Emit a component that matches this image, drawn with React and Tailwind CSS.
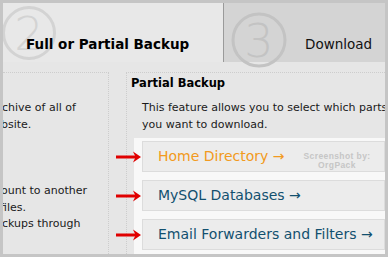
import React from "react";

function RedArrow() {
  return (
    <svg width="26" height="12" viewBox="0 0 26 12" className="absolute left-[-27px] top-1/2 -translate-y-1/2">
      <rect x="0" y="4.5" width="20" height="3" fill="#e00000" />
      <path d="M17 0.5 L25 6 L17 11.5 L19.5 6 Z" fill="#e00000" />
    </svg>
  );
}

function Item({ label, orange, children }) {
  return (
    <div className="relative h-[31px] shrink-0 border border-[#dcdcdc] bg-[#ececec] flex items-center pl-[15px]">
      <RedArrow />
      <span className={orange ? "text-[#f29a20] text-[14px]" : "text-[#12506f] text-[14px]"}>
        {label} →
      </span>
      {children}
    </div>
  );
}

export default function App() {
  return (
    <div
      className="w-[388px] h-[257px] overflow-hidden border-[3px] border-[#c5c5c5] bg-[#e6e6e6] flex flex-col"
      style={{ fontFamily: '"DejaVu Sans", Verdana, sans-serif' }}
    >
      {/* Tabs */}
      <div className="h-[59px] flex shrink-0">
        <div className="relative w-[220px] bg-[#e8e8e8] flex items-end pb-[10px] pl-[23px]">
          <svg width="60" height="60" viewBox="0 0 60 60" className="absolute left-[-1px] top-[1px]">
            <circle cx="27" cy="29" r="25.5" fill="none" stroke="#d3d3d3" strokeWidth="3" />
            <text x="27" y="46" textAnchor="middle" fontSize="46" fontWeight="200" fill="#d3d3d3" fontFamily="DejaVu Sans, sans-serif">2</text>
          </svg>
          <span className="relative text-[13.5px] font-bold text-black leading-[16px]">Full or Partial Backup</span>
        </div>
        <div className="relative flex-1 bg-[#d4d4d4] border-l border-[#9a9a9a] flex items-end pb-[10px] pl-[81px]">
          <svg width="64" height="58" viewBox="0 0 64 58" className="absolute left-[5px] top-[8px]">
            <circle cx="30" cy="29" r="26" fill="none" stroke="#c3c3c3" strokeWidth="3" />
            <text x="30" y="46" textAnchor="middle" fontSize="46" fontWeight="200" fill="#c3c3c3" fontFamily="DejaVu Sans, sans-serif">3</text>
          </svg>
          <span className="relative text-[13.5px] text-[#111] leading-[16px]">Download</span>
        </div>
      </div>

      {/* Content */}
      <div className="flex-1 flex pt-[10px] min-h-0">
        <div className="w-[106px] shrink-0 border-t border-r border-dotted border-[#cdcdcd] pt-[27px] text-[11px] leading-[16.5px] text-[#1a1a1a] overflow-hidden">
          <div className="-ml-[1px] whitespace-nowrap">chive of all of</div>
          <div className="-ml-[2px] whitespace-nowrap">bsite.</div>
          <div className="-ml-[2px] whitespace-nowrap mt-[50px]">ount to another</div>
          <div className="-ml-[3px] whitespace-nowrap">files.</div>
          <div className="-ml-[1px] whitespace-nowrap">ckups through</div>
        </div>
        <div className="flex-1 ml-[17px] border-t border-l border-dotted border-[#cdcdcd] flex flex-col min-w-0">
          <div className="pl-[4px] pt-[3px] text-[11.5px] font-bold text-black leading-[15px]">Partial Backup</div>
          <div className="pl-[15px] mt-[8px] text-[11px] leading-[17px] text-[#1a1a1a] whitespace-nowrap">
            <div>This feature allows you to select which parts of your backup</div>
            <div>you want to download.</div>
          </div>
          <div className="relative flex-1 ml-[7px] mt-[5px] bg-[#f8f8f8] pl-[8px] pt-[3px] flex flex-col gap-[8px]">
            <Item label="Home Directory" orange>
              <div
                className="absolute left-[160px] top-[10px] w-[68px] text-center text-[8.5px] font-bold leading-[9px] text-[#c6c6c6] tracking-[0.4px] whitespace-nowrap"
                style={{ fontFamily: '"Liberation Sans", Arial, sans-serif' }}
              >
                <div>Screenshot by:</div>
                <div>OrgPack</div>
              </div>
            </Item>
            <Item label="MySQL Databases" />
            <Item label="Email Forwarders and Filters" />
          </div>
        </div>
      </div>
    </div>
  );
}
